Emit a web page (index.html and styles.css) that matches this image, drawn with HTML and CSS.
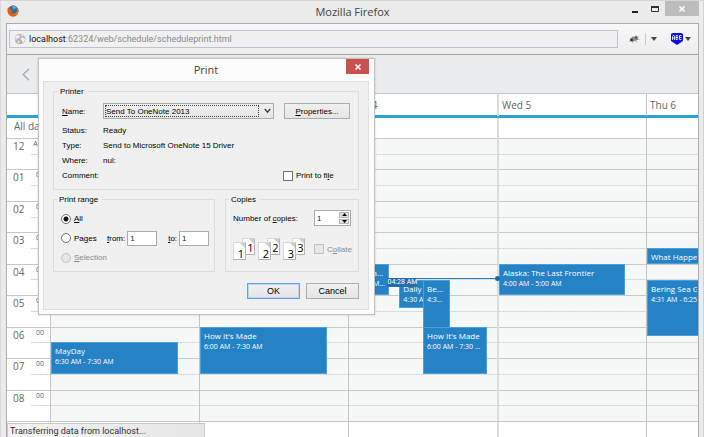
FILE: index.html
```html
<!DOCTYPE html>
<html lang="en">
<head>
<meta charset="utf-8">
<title>Mozilla Firefox</title>
<link rel="stylesheet" href="styles.css">
</head>
<body>
<div class="window">
  <header class="titlebar">
    <svg class="firefox" viewBox="0 0 12 12" aria-hidden="true">
      <circle cx="6" cy="6" r="5.500" fill="#e8701a"/>
      <circle cx="6.300" cy="4.800" r="4.200" fill="#2b6ea8"/>
      <path d="M6 .8c2 .2 3.500 1.500 4 3-1-.8-2-.5-3 .2S5 3 6 .8z" fill="#59b7dd"/>
      <path d="M.8 3C.2 6 .8 9 3.500 10.800c3 1.500 6.500.2 7.600-2.800.6-1.500.4-3.500-.4-5 .3 3-1 5.500-3.700 5.500C5 8.500 4 7.500 4 6.500c1 .3 1.800 0 2-.8C5 5.500 4.500 4.500 3 4.200 2.500 3.500 2.300 3 2.400 2.200 1.500 2.500 1.200 2.800.8 3z" fill="#e35d17"/>
      <path d="M10.500 4.500c.3 2.800-1.200 4.700-3.500 5.200 2.500.3 4.200-2 3.500-5.200z" fill="#fbc93a"/>
    </svg>
    <h1>Mozilla Firefox</h1>
    <div class="winbuttons">
      <button aria-label="Minimize"><svg viewBox="0 0 8 10"><path d="M1 8h6" stroke="#222" stroke-width="2"/></svg></button>
      <button aria-label="Maximize"><svg viewBox="0 0 8 10"><path d="M.5 2.500h7v5h-7z" fill="none" stroke="#333"/><path d="M0 3h8" stroke="#333" stroke-width="2"/></svg></button>
      <button class="close" aria-label="Close"><svg viewBox="0 0 8 10"><path d="M1.500 2.500l5 5m0-5l-5 5" stroke="#fff" stroke-width="1.500"/></svg></button>
    </div>
  </header>

  <div class="client">
    <nav class="navbar">
      <div class="urlbar">
        <svg viewBox="0 0 12 12" aria-hidden="true"><circle cx="6" cy="6" r="5.300" fill="#b4b4b4"/><path d="M2 3l2.500-1 1.500 1-1 2-2 .5L2 7 1 5.500zM7 5l2-.5 2 1.500-1 3-1.500.5L8 7.500 6.500 6.500zM4 7.500l1.500 1L5 10.500 3.800 9.500zM7.500 1.500l2 1-1 .8-1.500-.5z" fill="#eee"/></svg>
        <span><b>localhost</b>:62324/web/schedule/scheduleprint.html</span>
      </div>
      <div class="addons">
        <button aria-label="Debugger"><svg class="bug" viewBox="0 0 12 10"><path d="M1 8l2-2M2 4l2 1M4 2l1 2M8 1v2M11 2L9 4M11.500 5.500L9 5M8.500 8.500L8 6.500M5 9V7" stroke="#aaa" fill="none"/><ellipse cx="6.500" cy="4.800" rx="3.800" ry="2.200" fill="#888" transform="rotate(-22 6.500 4.800)"/><circle cx="3.500" cy="6" r="1.400" fill="#333"/><circle cx="8" cy="3.500" r="1" fill="#444"/></svg></button>
        <button class="drop split" aria-label="Debugger menu"><svg viewBox="0 0 6 4"><path d="M0 0h6L3 4z"/></svg></button>
        <button class="abe" aria-label="ABE"><svg viewBox="0 0 12 12"><path d="M0 1l2-1h8l2 1v7l-3 2-3 2-3-2-3-2z" fill="#0b0bf0"/><path d="M1.500 7V3.500L2.500 2l1 1.500V7M1.500 5h2M5 2.500v4h1.500l.5-1-.5-1H5h1.500l.5-1-.5-1zM10.500 2.500h-2v4h2M8.500 4.500h2" stroke="#fff" stroke-width=".8" fill="none"/></svg></button>
        <button class="drop" aria-label="ABE menu"><svg viewBox="0 0 6 4"><path d="M0 0h6L3 4z"/></svg></button>
      </div>
    </nav>

    <div class="pagebar"><button aria-label="Previous"><svg viewBox="0 0 8 13"><path d="M7 .8L1.200 6.500 7 12.200" fill="none" stroke="#a4a7aa" stroke-width="1.200"/></svg></button></div>

    <main class="calendar">
      <div class="grid heads">
        <div></div><div></div><div></div><div>Tue 4</div><div>Wed 5</div><div>Thu 6</div>
      </div>
      <div class="grid allday">
        <div>All day</div><div></div><div></div><div></div><div></div><div></div>
      </div>
      <div class="grid slots">
        <div class="times">
          <div><b>12</b><i>AM</i></div><div><b>01</b><i>00</i></div><div><b>02</b><i>00</i></div>
          <div><b>03</b><i>00</i></div><div><b>04</b><i>00</i></div><div><b>05</b><i>00</i></div>
          <div><b>06</b><i>00</i></div><div><b>07</b><i>00</i></div><div><b>08</b><i>00</i></div>
        </div>
        <div class="day">
          <div class="hours"><p></p><p></p><p></p><p></p><p></p><p></p><p></p><p></p><p></p></div>
          <article style="--s:6.5;--d:1;--l:0%;--w:86%"><h2>MayDay</h2>6:30 AM - 7:30 AM</article>
        </div>
        <div class="day">
          <div class="hours"><p></p><p></p><p></p><p></p><p></p><p></p><p></p><p></p><p></p></div>
          <article style="--s:6;--d:1.5;--l:0%;--w:86%"><h2>How It's Made</h2>6:00 AM - 7:30 AM</article>
        </div>
        <div class="day">
          <div class="hours"><p></p><p></p><p></p><p></p><p></p><p></p><p></p><p></p><p></p></div>
          <article style="--s:4;--d:1;--l:0%;--w:27%"><h2>Alaska: The</h2>4:00 AM - 5:00</article>
          <article class="clip" style="--s:4.5;--d:.9;--l:34%;--w:26%"><h2>Daily</h2>4:30 AM</article>
          <article style="--s:4.5;--d:1.9;--l:50%;--w:18%"><h2>Bering</h2>4:31 AM</article>
          <article style="--s:6;--d:1.5;--l:50%;--w:43%"><h2>How It's Made</h2>6:00 AM - 7:30 AM</article>
          <div class="now"><time>04:28 AM</time></div>
        </div>
        <div class="day">
          <div class="hours"><p></p><p></p><p></p><p></p><p></p><p></p><p></p><p></p><p></p></div>
          <article style="--s:4;--d:1;--l:0%;--w:86%"><h2>Alaska: The Last Frontier</h2>4:00 AM - 5:00 AM</article>
        </div>
        <div class="day">
          <div class="hours"><p></p><p></p><p></p><p></p><p></p><p></p><p></p><p></p><p></p></div>
          <article class="clip" style="--s:3.5;--d:.5;--l:0%;--w:105%"><h2>What Happened</h2></article>
          <article class="clip" style="--s:4.5;--d:1.8;--l:0%;--w:105%"><h2>Bering Sea Gold</h2>4:31 AM - 6:25 AM</article>
        </div>
      </div>
      <div class="grid rest"><div></div><div></div><div></div><div></div><div></div><div></div></div>
    </main>
    <div class="status">Transferring data from localhost...</div>
  </div>
</div>

<form class="dialog" role="dialog" aria-labelledby="dt">
  <header><h2 id="dt">Print</h2>
    <button type="button" aria-label="Close"><svg viewBox="0 0 8 8"><path d="M1.500 1.500l5 5m0-5l-5 5" stroke="#fff" stroke-width="1.500"/></svg></button>
  </header>
  <div class="panel">
    <fieldset class="printer">
      <legend>Printer</legend>
      <div class="namerow">
        <label for="pn"><u>N</u>ame:</label>
        <div class="select">
          <select id="pn"><option>Send To OneNote 2013</option></select>
          <svg viewBox="0 0 7 6" aria-hidden="true"><path d="M.8 1l2.700 3.200L6.200 1" fill="none" stroke="#444" stroke-width="1.500"/></svg>
        </div>
        <button type="button" class="btn"><span><u>P</u>roperties...</span></button>
      </div>
      <dl>
        <dt>Status:</dt><dd>Ready</dd>
        <dt>Type:</dt><dd>Send to Microsoft OneNote 15 Driver</dd>
        <dt>Where:</dt><dd>nul:</dd>
        <dt>Comment:</dt><dd><label class="tick"><input type="checkbox"><span>Print to fi<u>l</u>e</span></label></dd>
      </dl>
    </fieldset>
    <div class="pair">
      <fieldset class="range">
        <legend>Print range</legend>
        <label class="tick"><input type="radio" name="r" checked><span><u>A</u>ll</span></label>
        <div class="pages">
          <label class="tick"><input type="radio" name="r"><span>Pa<u>g</u>es</span></label>
          <label for="pf"><u>f</u>rom:</label><input type="text" id="pf" value="1">
          <label for="pt"><u>t</u>o:</label><input type="text" id="pt" value="1">
        </div>
        <label class="tick off"><input type="radio" name="r" disabled><span><u>S</u>election</span></label>
      </fieldset>
      <fieldset class="copies">
        <legend>Copies</legend>
        <div class="count">
          <label for="nc">Number of <u>c</u>opies:</label>
          <div class="spin"><input type="text" id="nc" value="1">
            <div><button type="button" aria-label="More"><svg viewBox="0 0 5 3"><path d="M0 3h5L2.500 0z"/></svg></button><button type="button" aria-label="Fewer"><svg viewBox="0 0 5 3"><path d="M0 0h5L2.500 3z"/></svg></button></div>
          </div>
        </div>
        <div class="count">
          <div class="sheets">
            <div><span>1</span><span>1</span></div>
            <div><span>2</span><span>2</span></div>
            <div><span>3</span><span>3</span></div>
          </div>
          <label class="tick off"><input type="checkbox" disabled><span>C<u>o</u>llate</span></label>
        </div>
      </fieldset>
    </div>
    <footer>
      <button type="submit" class="btn primary">OK</button>
      <button type="button" class="btn">Cancel</button>
    </footer>
  </div>
</form>
</body>
</html>
```
FILE: styles.css
```css
* { box-sizing: border-box; }
body {
  margin: 0;
  overflow: hidden;
  position: relative;
  font-family: "Open Sans", "Noto Sans", sans-serif;
  font-size: 10px;
  color: #666;
}
h1, h2, p, dl, dd { margin: 0; font-weight: normal; }
b, i { font-weight: normal; font-style: normal; }
button { font: inherit; color: inherit; border: 0; padding: 0; background: none; }
svg { display: block; }

.window {
  height: 100vh;
  display: flex;
  flex-direction: column;
  background: #ebebeb;
  border-top: 1px solid #d5d5d5;
  border-right: 1px solid #d2d2d2;
  border-left: 1px solid #dadada;
  padding: 0 4px 0 5px;
}
.titlebar {
  height: 22px;
  display: grid;
  grid-template-columns: 1fr auto 1fr;
  align-items: start;
}
.firefox { width: 12px; height: 12px; margin: 4px 1px; }
.titlebar h1 { font-size: 11px; line-height: 22px; color: #444; }
.winbuttons { display: flex; justify-content: flex-end; }
.winbuttons button { width: 20px; height: 15px; display: grid; place-items: center; }
.winbuttons .close { width: 34px; background: #bcbcbc; }
.winbuttons svg { width: 8px; height: 10px; }

.client {
  flex: 1;
  min-height: 0;
  position: relative;
  display: flex;
  flex-direction: column;
  overflow: hidden;
  border: 1px solid #a9adb2;
  border-bottom: 0;
  background: #fff;
}
.navbar {
  height: 31px;
  flex: none;
  display: flex;
  align-items: center;
  padding: 0 6px 0 2px;
  background: linear-gradient(#f8f8f8, #ededed);
  border-bottom: 1px solid #a2a4a7;
}
.urlbar {
  flex: 1;
  height: 18px;
  display: flex;
  align-items: center;
  gap: 3px;
  padding-left: 4px;
  background: #f0f0f0;
  border: 1px solid #bcc5ce;
  color: #8a8a8a;
  white-space: nowrap;
  font-family: Roboto, sans-serif;
  font-size: 9px;
}
.urlbar svg { width: 12px; height: 12px; }
.urlbar b { color: #111; }
.addons { display: flex; align-items: center; width: 74px; padding-left: 10px; }
.bug { width: 12px; height: 10px; }
.drop svg { width: 6px; height: 4px; fill: #444; }
.split { border-left: 1px solid #ccc; padding: 4px 0 4px 5px; margin-left: 5px; }
.abe { margin: 0 2px 0 14px; }
.abe svg { width: 12px; height: 12px; }

.pagebar {
  height: 39px;
  flex: none;
  background: #ebecee;
  border-bottom: 1px solid #c2c4c6;
  padding: 13px 15px;
}
.pagebar svg { width: 8px; height: 13px; }

.grid {
  display: grid;
  grid-template-columns: 43px repeat(4, 149fr) 52fr;
}
.grid > div { min-width: 0; border-left: 1px solid #c4c4c4; }
.grid > div:first-child { border-left: 0; }
.grid > div:nth-child(5) { border-left: 2px solid #dcdcdc; }
.heads { height: 21px; line-height: 22px; }
.heads > div { padding-left: 3px; white-space: nowrap; }
.allday { height: 23px; border-top: 3px solid #29a3dc; line-height: 16px; }
.allday > div:first-child { padding-left: 7px; }
.slots { height: 284px; border-bottom: 1px solid #c4c6c6; }
.times, .hours { display: grid; grid-template-rows: repeat(9, 1fr); }
.times > div {
  display: flex;
  justify-content: space-between;
  padding: 0 6px 0 6px;
  border-top: 1px solid #c6c8c8;
  background: repeating-linear-gradient(90deg, #cfcfcf 0 2px, #eee 2px 3px) 24px 50% / 19px 1px no-repeat;
  line-height: 15px;
}
.times i { font-size: 7px; line-height: 9px; }
.day { position: relative; background: #f6f8f8; }
.hours { height: 100%; }
.hours p {
  border-top: 1px solid #c9cbcb;
  background: repeating-linear-gradient(90deg, #d4d6d6 0 2px, #eaecec 2px 3px) 0 50% / 100% 1px no-repeat;
}
.rest { height: 60px; }
article {
  position: absolute;
  top: calc(var(--s) * 100% / 9);
  height: calc(var(--d) * 100% / 9);
  left: var(--l);
  width: var(--w);
  overflow: hidden;
  white-space: nowrap;
  text-overflow: ellipsis;
  padding: 1px 3px;
  background: #2482c5;
  border: 1px solid #4a9fdc;
  color: #fff;
  font-size: 7px;
  line-height: 10px;
}
article h2 {
  font-size: 8px;
  line-height: 13px;
  overflow: hidden;
  text-overflow: ellipsis;
}
.clip, .clip h2 { text-overflow: clip; }
.now {
  position: absolute;
  z-index: 1;
  top: 49.5%;
  left: 26%;
  right: 0;
  border-top: 1px solid #2482b5;
}
.now::after {
  content: "";
  position: absolute;
  right: -3px;
  top: -3px;
  width: 5px;
  height: 5px;
  border-radius: 50%;
  background: #1b6ca5;
}
.now time {
  position: absolute;
  left: 0;
  top: -1px;
  font: 7px/9px Roboto, sans-serif;
  white-space: nowrap;
  background: #206fa8;
  color: #fff;
}
.status {
  position: absolute;
  left: 0;
  bottom: 0;
  width: 198px;
  height: 14px;
  padding-left: 2px;
  font: 9px/15px Roboto, sans-serif;
  color: #333;
  background: linear-gradient(90deg, #f2f2f2, #e6e6e6);
  border: 1px solid #c8c8c8;
  border-bottom: 0;
}

.dialog {
  position: absolute;
  z-index: 2;
  left: 38px;
  top: 58px;
  width: 337px;
  padding: 0 5px 4px 4px;
  background: #fcfcfc;
  border: 1px solid #c2c2c2;
  box-shadow: 0 0 2px rgba(0, 0, 0, .2);
  font-family: "Liberation Sans", Arial, sans-serif;
  font-size: 8px;
  line-height: 11px;
  color: #000;
}
.dialog header { position: relative; height: 22px; }
.dialog header h2 {
  font: 11px/22px "Open Sans", sans-serif;
  text-align: center;
  color: #444;
}
.dialog header button {
  position: absolute;
  right: 0;
  top: 0;
  width: 23px;
  height: 15px;
  display: grid;
  place-items: center;
  background: #c75050;
}
.dialog header svg { width: 8px; height: 8px; }
.panel {
  background: #f0f0f0;
  border: 1px solid #dfdfdf;
  padding: 4px 9px 10px;
}
fieldset {
  margin: 0;
  min-width: 0;
  border: 1px solid #dcdcdc;
  padding: 0 8px;
}
legend { padding: 0 4px 0 2px; margin-left: -4px; }
.printer { height: 104px; }
.namerow { display: flex; align-items: center; padding-top: 6px; }
.namerow > label { width: 41px; }
.select { flex: 1; position: relative; margin-right: 10px; }
.select select {
  appearance: none;
  display: block;
  width: 100%;
  height: 16px;
  font: inherit;
  color: #000;
  padding: 0 0 0 2px;
  border: 1px solid #acacac;
  border-radius: 0;
  background: linear-gradient(#f0f0f0, #e5e5e5);
}
.select::after {
  content: "";
  position: absolute;
  inset: 2px 15px 2px 2px;
  border: 1px dotted #444;
  pointer-events: none;
}
.select svg { position: absolute; right: 3px; top: 5px; width: 7px; height: 6px; }
.btn {
  height: 16px;
  border: 1px solid #acacac;
  background: linear-gradient(#f0f0f0, #e5e5e5);
  line-height: 11px;
}
.namerow .btn { width: 66px; }
dl { display: grid; grid-template-columns: 41px 1fr; line-height: 15px; padding-top: 4px; }
dd { white-space: nowrap; }
dd .tick { margin: 2px 0 0 180px; }
.tick { display: flex; align-items: center; gap: 3px; line-height: 11px; }
.tick input {
  appearance: none;
  flex: none;
  margin: 0;
  width: 10px;
  height: 10px;
  border: 1px solid #707070;
  background: #fff;
}
.tick input[type=radio] { border-radius: 50%; }
.tick input:checked { background: radial-gradient(circle, #111 0 2px, #fff 3px); }
.off { color: #8a8a8a; }
.tick.off input { border-color: #c2c2c2; background: #e6e6e6; }
.pair {
  display: grid;
  grid-template-columns: 162fr 134fr;
  gap: 10px;
  margin-top: 4px;
}
.pair fieldset { height: 78px; padding: 0 7px; }
.range .tick { height: 19px; }
.range > .tick { margin-top: 4px; }
.range > .off { margin-top: 0; }
.pages { display: flex; align-items: center; height: 20px; }
.pages .tick { width: 46px; }
.pages > label + input { margin: 0 11px 0 auto; }
.pages input[type=text] { width: 30px; height: 15px; }
.pages > label + input:last-child { margin: 0 -2px 0 auto; }
input[type=text] {
  font: inherit;
  color: #224;
  border: 1px solid #ababab;
  padding: 0 2px;
  background: #fff;
}
.count { display: flex; align-items: center; justify-content: space-between; }
.copies .count { padding-top: 5px; }
.copies .count + .count { padding-top: 12px; }
.spin { display: flex; width: 37px; height: 16px; border: 1px solid #ababab; background: #fff; }
.spin input { width: 23px; border: 0; }
.spin > div { flex: 1; display: grid; gap: 1px; padding: 1px; }
.spin button { background: #e4e4e4; border: 1px solid #b5b5b5; display: grid; place-items: center; }
.spin svg { width: 5px; height: 3px; }
.sheets { display: flex; gap: 3px; }
.sheets div { display: flex; }
.sheets span {
  width: 13px;
  height: 18px;
  padding: 5px 0 0 3px;
  font: 11px/12px "Open Sans", sans-serif;
  text-align: center;
  background: linear-gradient(225deg, #ccc 3px, #fff 4px);
  border: 1px solid #d8d8d8;
  border-right-color: #b8b8b8;
  border-bottom-color: #b0b0b0;
}
.sheets span:first-child { margin: 4px -4px 0 0; }
.sheets span:last-child { height: 17px; padding: 3px 0 0 4px; }
.sheets span:first-child { position: relative; z-index: 1; }
.count .tick { width: 37px; }
.dialog footer { display: flex; justify-content: flex-end; gap: 6px; margin-top: 11px; }
.dialog footer .btn { width: 53px; font-size: 9px; }
.btn.primary { border-color: #5ea3e6; box-shadow: inset 0 0 0 1px #b5d7f5; }
```
